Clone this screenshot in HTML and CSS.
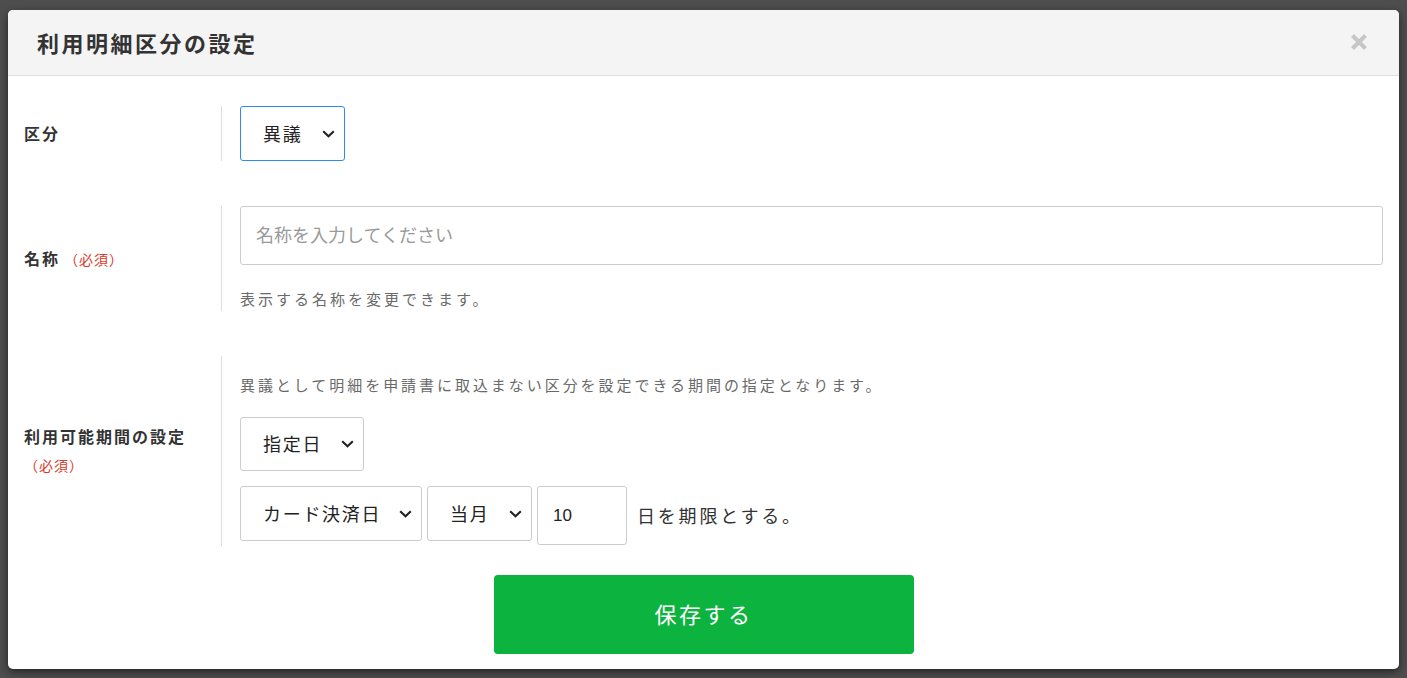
FILE: index.html
```html
<!DOCTYPE html>
<html lang="ja">
<head>
<meta charset="utf-8">
<title>利用明細区分の設定</title>
<link rel="stylesheet" href="styles.css">
</head>
<body>
<div class="modal">
  <div class="modal-header">
    <h1 class="modal-title">利用明細区分の設定</h1>
    <button class="close-btn" type="button" aria-label="閉じる">
      <svg width="18" height="18" viewBox="0 0 18 18"><path d="M2.5 2.5 L15.5 15.5 M15.5 2.5 L2.5 15.5" stroke="#c6c6c6" stroke-width="4" stroke-linecap="butt"/></svg>
    </button>
  </div>
  <div class="modal-body">
    <div class="form-row">
      <div class="form-label">区分</div>
      <div class="form-field">
        <select class="select select-focus w-kubun">
          <option>異議</option>
        </select>
      </div>
    </div>

    <div class="form-row">
      <div class="form-label">名称<span class="required">（必須）</span></div>
      <div class="form-field">
        <input class="text-input" type="text" placeholder="名称を入力してください">
        <p class="help-text help-below">表示する名称を変更できます。</p>
      </div>
    </div>

    <div class="form-row">
      <div class="form-label">利用可能期間の設定<span class="required required-block">（必須）</span></div>
      <div class="form-field">
        <p class="help-text help-above">異議として明細を申請書に取込まない区分を設定できる期間の指定となります。</p>
        <select class="select w-shitei">
          <option>指定日</option>
        </select>
        <div class="inline-row">
          <select class="select w-card">
            <option>カード決済日</option>
          </select>
          <select class="select w-month">
            <option>当月</option>
          </select>
          <input class="day-input" type="text" value="10">
          <span class="inline-text">日を期限とする。</span>
        </div>
      </div>
    </div>

    <div class="actions">
      <button class="save-btn" type="button">保存する</button>
    </div>
  </div>
</div>
</body>
</html>
```

FILE: styles.css
```css
* {
  box-sizing: border-box;
}

html, body {
  margin: 0;
  padding: 0;
}

body {
  width: 1407px;
  height: 678px;
  overflow: hidden;
  background: #4e4e4e;
  font-family: "Noto Sans CJK JP", "Noto Sans", sans-serif;
  color: #333;
  padding: 10px 8px 0 8px;
}

.modal {
  width: 1391px;
  height: 659px;
  background: #fff;
  border-radius: 5px;
  box-shadow: 0 3px 8px rgba(0, 0, 0, 0.55);
  overflow: hidden;
}

.modal-header {
  height: 66px;
  background: #f4f4f4;
  border-bottom: 1px solid #dedede;
  display: flex;
  align-items: center;
  justify-content: space-between;
  padding: 0 31px 0 29px;
}

.modal-title {
  margin: 0;
  font-size: 22px;
  font-weight: 700;
  letter-spacing: 2.5px;
  color: #333;
  line-height: 1;
  padding-bottom: 1px;
}

.close-btn {
  border: none;
  background: transparent;
  padding: 0;
  width: 18px;
  height: 18px;
  display: flex;
  cursor: pointer;
  margin-bottom: 1px;
}

.modal-body {
  padding: 30px 16px 16px 16px;
  display: flex;
  flex-direction: column;
  gap: 45px;
}

.form-row {
  display: flex;
  align-items: center;
}

.form-label {
  width: 197px;
  flex: none;
  font-size: 16px;
  font-weight: 700;
  letter-spacing: 2px;
  line-height: 29px;
  color: #333;
  padding-right: 8px;
}

.required {
  font-size: 14px;
  font-weight: 400;
  letter-spacing: 1px;
  color: #d93a2b;
  margin-left: 4px;
}

.required-block {
  display: block;
  margin-left: 0;
}

.form-field {
  flex: 1;
  border-left: 1px solid #dddddd;
  padding-left: 18px;
  display: flex;
  flex-direction: column;
  align-items: flex-start;
}

.select {
  appearance: none;
  -webkit-appearance: none;
  height: 55px;
  border: 1px solid #cccccc;
  border-radius: 3px;
  background-color: #fff;
  background-image: url("data:image/svg+xml;utf8,<svg xmlns='http://www.w3.org/2000/svg' width='13' height='8' viewBox='0 0 13 8'><path d='M1.2 1.2 L6.5 6.3 L11.8 1.2' fill='none' stroke='%23222' stroke-width='2.1'/></svg>");
  background-repeat: no-repeat;
  background-position: right 9px center;
  background-size: 13px 8px;
  padding: 0 24px 2px 22px;
  font-family: "Noto Sans CJK JP", "Noto Sans", sans-serif;
  font-size: 18px;
  letter-spacing: 1.7px;
  color: #222;
  outline: none;
}

.select-focus {
  border-color: #2b8af5;
}

.w-kubun { width: 105px; }
.w-shitei { width: 124px; height: 54px; }
.w-card { width: 182px; }
.w-month { width: 105px; }

.text-input {
  width: 100%;
  height: 59px;
  border: 1px solid #cccccc;
  border-radius: 3px;
  padding: 0 15px 4px 15px;
  font-family: "Noto Sans CJK JP", "Noto Sans", sans-serif;
  font-size: 18px;
  color: #333;
  outline: none;
}

.text-input::placeholder {
  color: #9a9a9a;
}

.help-text {
  margin: 0;
  font-size: 15px;
  line-height: 24px;
  color: #6a6a6a;
}

.help-below {
  margin-top: 22px;
  letter-spacing: 3px;
}

.help-above {
  margin-top: 17px;
  margin-bottom: 20px;
  letter-spacing: 2.95px;
}

.inline-row {
  margin-top: 15px;
  margin-bottom: 1px;
  display: flex;
  align-items: flex-start;
  gap: 5px;
}

.day-input {
  width: 90px;
  height: 59px;
  border: 1px solid #cccccc;
  border-radius: 3px;
  padding: 0 15px;
  font-family: "Liberation Sans", Arial, sans-serif;
  font-size: 17px;
  color: #222;
  outline: none;
}

.inline-text {
  align-self: center;
  margin-left: 5px;
  font-size: 18px;
  letter-spacing: 2.8px;
  color: #333;
  line-height: 24px;
  padding-bottom: 2px;
}

.actions {
  display: flex;
  justify-content: center;
  margin-top: -16px;
}

.save-btn {
  width: 420px;
  height: 79px;
  border: none;
  border-radius: 4px;
  background: #0db33f;
  color: #fff;
  font-family: "Noto Sans CJK JP", "Noto Sans", sans-serif;
  font-size: 22px;
  letter-spacing: 2.5px;
  padding: 0 0 4px 0;
  cursor: pointer;
}
```
